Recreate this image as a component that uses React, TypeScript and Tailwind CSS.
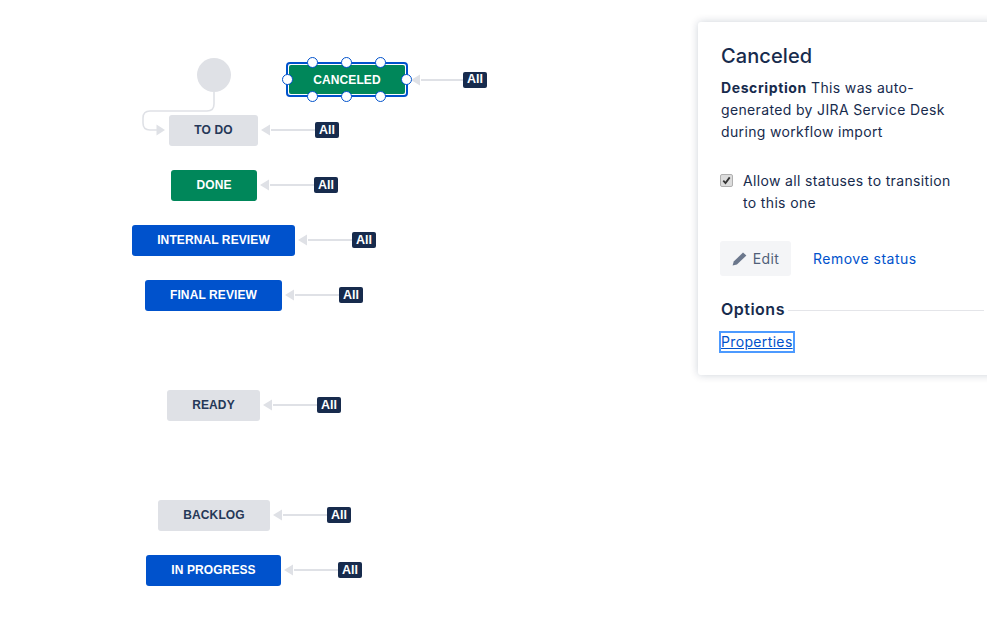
const nodes = [
  { label: "TO DO", pos: "left-[169px] top-[114.5px]", w: "w-[89px]", color: "bg-[#dfe1e6] text-[#253858]" },
  { label: "DONE", pos: "left-[171px] top-[169.5px]", w: "w-[86px]", color: "bg-[#00875a] text-white" },
  { label: "INTERNAL REVIEW", pos: "left-[132px] top-[224.5px]", w: "w-[163px]", color: "bg-[#0052cc] text-white" },
  { label: "FINAL REVIEW", pos: "left-[145px] top-[279.5px]", w: "w-[137px]", color: "bg-[#0052cc] text-white" },
  { label: "READY", pos: "left-[167px] top-[389.5px]", w: "w-[93px]", color: "bg-[#dfe1e6] text-[#253858]" },
  { label: "BACKLOG", pos: "left-[158px] top-[499.5px]", w: "w-[112px]", color: "bg-[#dfe1e6] text-[#253858]" },
  { label: "IN PROGRESS", pos: "left-[146px] top-[554.5px]", w: "w-[135px]", color: "bg-[#0052cc] text-white" },
];

const sans = "font-['Liberation_Sans',Arial,sans-serif]";
const ui = "font-['Inter','Noto_Sans',sans-serif]";

function Connector({ width }: { width: string }) {
  return (
    <div className={`flex items-center pl-[3px] ${width}`}>
      <svg width="10" height="12" viewBox="0 0 10 12" className="shrink-0">
        <path d="M0 6 L9 0.5 V11.5 Z" fill="#dfe1e6" />
      </svg>
      <div className="h-[2px] flex-1 bg-[#dfe1e6]" />
    </div>
  );
}

function Badge() {
  return (
    <div className={`flex h-[16px] w-[24px] items-center justify-center rounded-[2px] bg-[#172b4d] text-[12.5px] font-bold text-white ${sans}`}>
      All
    </div>
  );
}

function Handle({ pos }: { pos: string }) {
  return <div className={`absolute h-[11px] w-[11px] rounded-full border-[1.5px] border-[#0052cc] bg-white ${pos}`} />;
}

export default function App() {
  return (
    <div className={`relative h-[644px] w-[987px] overflow-hidden bg-white ${sans}`}>
      {/* start node and its elbow */}
      <div className="absolute left-[197px] top-[58px] h-[34px] w-[34px] rounded-full bg-[#dfe1e6]" />
      <svg className="absolute left-[140px] top-[90px]" width="80" height="50" viewBox="0 0 80 50">
        <path d="M74 2 V14 Q74 21 67 21 H10 Q3 21 3 28 V33 Q3 40 10 40 H17" fill="none" stroke="#dfe1e6" strokeWidth="1.6" />
        <path d="M25 40 L16.5 34.5 V45.5 Z" fill="#dfe1e6" />
      </svg>

      {/* selected status */}
      <div className="absolute left-[286px] top-[62px] flex items-center">
        <div className="relative h-[35px] w-[122px] rounded-[4px] border-2 border-[#0052cc] p-[1px]">
          <div className="flex h-full items-center justify-center rounded-[2px] bg-[#00875a] text-[12px] font-bold tracking-[0.1px] text-white">
            CANCELED
          </div>
          <Handle pos="left-[19px] top-[-7px]" />
          <Handle pos="left-[53px] top-[-7px]" />
          <Handle pos="left-[87px] top-[-7px]" />
          <Handle pos="left-[19px] bottom-[-7px]" />
          <Handle pos="left-[53px] bottom-[-7px]" />
          <Handle pos="left-[87px] bottom-[-7px]" />
          <Handle pos="left-[-6px] top-[10px]" />
          <Handle pos="right-[-6px] top-[10px]" />
        </div>
        <Connector width="w-[55px]" />
        <Badge />
      </div>

      {/* status nodes */}
      {nodes.map((n) => (
        <div key={n.label} className={`absolute flex items-center ${n.pos}`}>
          <div className={`flex h-[31px] items-center justify-center rounded-[3px] text-[12px] font-bold tracking-[0.1px] ${n.w} ${n.color}`}>
            {n.label}
          </div>
          <Connector width="w-[57px]" />
          <Badge />
        </div>
      ))}

      {/* details panel */}
      <aside className={`absolute left-[698px] top-[22px] h-[353px] w-[300px] rounded-[3px] bg-white pl-[23px] pt-[20px] text-[14px] leading-[22px] tracking-[0.35px] text-[#172b4d] shadow-[0_0_8px_rgba(9,30,66,0.2)] ${ui}`}>
        <h2 className="text-[20px] font-medium leading-[28px] tracking-[0.1px]">Canceled</h2>
        <p className="mt-[7px] w-[235px]">
          <strong className="font-bold tracking-[0.6px]">Description</strong> This was auto-generated by JIRA Service Desk during workflow import
        </p>
        <label className="-ml-[1px] mt-[27px] flex w-[240px] items-start">
          <span className="mt-[4px] flex h-[13px] w-[13px] shrink-0 items-center justify-center rounded-[2px] border border-[#b0b0b0] bg-[#dcdcdc]">
            <svg width="9" height="9" viewBox="0 0 9 9">
              <path d="M1.3 4.6 L3.5 7 L7.7 1.4" fill="none" stroke="#333" strokeWidth="1.8" />
            </svg>
          </span>
          <span className="ml-[10px] w-[215px]">Allow all statuses to transition to this one</span>
        </label>
        <div className="-ml-[1px] mt-[27px] flex items-center">
          <button className="flex h-[35px] w-[71px] items-center justify-center gap-[6px] rounded-[3px] bg-[#f4f5f7] text-[#505f79]">
            <svg width="15" height="14" viewBox="0 0 15 14">
              <path d="M11 0.6 L14.4 3.6 L4.9 12.4 L0.6 13.6 L1.7 9.5 Z" fill="#6b778c" />
            </svg>
            Edit
          </button>
          <a className="ml-[22px] tracking-[0.5px] text-[#0052cc]">Remove status</a>
        </div>
        <div className="mt-[22px] flex items-center">
          <h3 className="text-[16px] font-semibold leading-[22px] tracking-[0.5px]">Options</h3>
          <div className="ml-[3px] mt-[2px] h-[1px] w-[196px] bg-[#e4e5e9]" />
        </div>
        <a className="mt-[13px] inline-block text-[#0052cc] underline leading-[18px] outline-2 outline-[#4c9aff] outline-offset-0">Properties</a>
      </aside>
    </div>
  );
}
